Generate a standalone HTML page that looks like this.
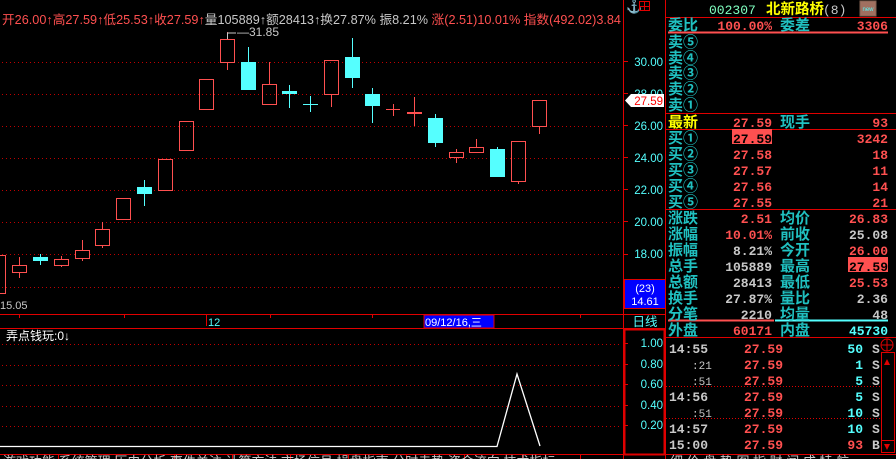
<!DOCTYPE html>
<html><head><meta charset="utf-8"><style>
html,body{margin:0;padding:0;background:#000;width:896px;height:459px;overflow:hidden}
svg{display:block}
text{font-family:"Liberation Sans","Noto Sans CJK SC","WenQuanYi Zen Hei",sans-serif}
.m, .m text{font-family:"Liberation Mono","Noto Sans CJK SC",monospace}
</style></head><body>
<svg width="896" height="459" viewBox="0 0 896 459" xmlns="http://www.w3.org/2000/svg">
<!-- top info line -->
<text x="2" y="24" font-size="12.5" fill="#ff5050" textLength="619" lengthAdjust="spacingAndGlyphs">开26.00↑高27.59↑低25.53↑收27.59↑<tspan fill="#c8c8c8">量105889↑额28413↑换27.87% 振8.21% </tspan>涨(2.51)10.01% 指数(492.02)3.84</text>

<!-- grid dotted lines main -->
<g stroke="#c00000" stroke-dasharray="1,3" stroke-width="1">
<line x1="2" y1="62.5" x2="622" y2="62.5"/>
<line x1="2" y1="94.5" x2="622" y2="94.5"/>
<line x1="2" y1="126.5" x2="622" y2="126.5"/>
<line x1="2" y1="158.5" x2="622" y2="158.5"/>
<line x1="2" y1="190.5" x2="622" y2="190.5"/>
<line x1="2" y1="222.5" x2="622" y2="222.5"/>
<line x1="2" y1="254.5" x2="622" y2="254.5"/>
<line x1="2" y1="287.5" x2="622" y2="287.5"/>
<line x1="2" y1="344.5" x2="622" y2="344.5"/>
<line x1="2" y1="365.5" x2="622" y2="365.5"/>
<line x1="2" y1="385.5" x2="622" y2="385.5"/>
<line x1="2" y1="406.5" x2="622" y2="406.5"/>
<line x1="2" y1="426.5" x2="622" y2="426.5"/>
</g>

<!-- candles -->
<g stroke="#ff5050" fill="none" stroke-width="1">
<rect x="-3.5" y="255.5" width="9" height="38"/>
<line x1="19.5" y1="257" x2="19.5" y2="278"/><rect x="12.5" y="265.5" width="14" height="7" fill="#000"/>
<line x1="61.5" y1="256" x2="61.5" y2="267"/><rect x="54.5" y="259.5" width="14" height="6" fill="#000"/>
<line x1="82.5" y1="240" x2="82.5" y2="261"/><rect x="75.5" y="250.5" width="14" height="8" fill="#000"/>
<line x1="102.5" y1="222" x2="102.5" y2="248"/><rect x="95.5" y="229.5" width="14" height="16" fill="#000"/>
<rect x="116.5" y="198.5" width="14" height="21"/>
<rect x="158.5" y="159.5" width="14" height="31"/>
<rect x="179.5" y="121.5" width="14" height="29"/>
<rect x="199.5" y="79.5" width="14" height="30"/>
<line x1="227.5" y1="32" x2="227.5" y2="70"/><rect x="220.5" y="39.5" width="14" height="23" fill="#000"/>
<line x1="269.5" y1="62" x2="269.5" y2="84"/><rect x="262.5" y="84.5" width="14" height="20"/>
<line x1="331.5" y1="94" x2="331.5" y2="107"/><rect x="324.5" y="60.5" width="14" height="34"/>
<line x1="393.5" y1="104" x2="393.5" y2="116"/><line x1="386" y1="109.5" x2="400" y2="109.5"/>
<line x1="414.5" y1="97" x2="414.5" y2="126"/><line x1="407" y1="113" x2="422" y2="113" stroke-width="2"/>
<line x1="456.5" y1="149" x2="456.5" y2="163"/><rect x="449.5" y="152.5" width="14" height="5" fill="#000"/>
<line x1="476.5" y1="139" x2="476.5" y2="153"/><rect x="469.5" y="147.5" width="14" height="5" fill="#000"/>
<line x1="518.5" y1="181" x2="518.5" y2="184"/><rect x="511.5" y="141.5" width="14" height="40"/>
<line x1="539.5" y1="126" x2="539.5" y2="134"/><rect x="532.5" y="100.5" width="14" height="26"/>
</g>
<g stroke="#55ffff" fill="#55ffff" stroke-width="1">
<line x1="40.5" y1="254" x2="40.5" y2="265"/><rect x="33" y="257" width="15" height="4" stroke="none"/>
<line x1="144.5" y1="180" x2="144.5" y2="206"/><rect x="137" y="187" width="15" height="7" stroke="none"/>
<line x1="248.5" y1="47" x2="248.5" y2="62"/><rect x="241" y="62" width="15" height="28" stroke="none"/>
<line x1="289.5" y1="85" x2="289.5" y2="108"/><rect x="282" y="91" width="15" height="3" stroke="none"/>
<line x1="310.5" y1="96" x2="310.5" y2="112"/><line x1="303" y1="104.5" x2="318" y2="104.5"/>
<line x1="352.5" y1="38" x2="352.5" y2="88"/><rect x="345" y="57" width="15" height="21" stroke="none"/>
<line x1="372.5" y1="88" x2="372.5" y2="123"/><rect x="365" y="94" width="15" height="12" stroke="none"/>
<line x1="435.5" y1="114" x2="435.5" y2="147"/><rect x="428" y="118" width="15" height="25" stroke="none"/>
<line x1="497.5" y1="147" x2="497.5" y2="149"/><rect x="490" y="149" width="15" height="28" stroke="none"/>
</g>
<polyline points="227.5,39 227.5,33 236,33" stroke="#c8c8c8" fill="none"/>
<text x="237" y="36" font-size="12" fill="#c8c8c8">—31.85</text>
<text x="0" y="309" font-size="11" fill="#c8c8c8">15.05</text>

<!-- date strip -->
<line x1="0" y1="314.5" x2="666" y2="314.5" stroke="#e00000"/>
<line x1="0" y1="328.5" x2="666" y2="328.5" stroke="#e00000"/>
<g stroke="#e00000"><line x1="19.5" y1="315" x2="19.5" y2="318"/><line x1="124.5" y1="315" x2="124.5" y2="318"/><line x1="206.5" y1="315" x2="206.5" y2="326"/><line x1="270.5" y1="315" x2="270.5" y2="318"/><line x1="372.5" y1="315" x2="372.5" y2="318"/><line x1="580.5" y1="315" x2="580.5" y2="318"/></g>
<text x="208" y="326" font-size="11" fill="#55ffff">12</text>
<rect x="424" y="315" width="70" height="13" fill="#0000ff" stroke="#e00000"/>
<text x="425" y="326" font-size="11" fill="#fff">09/12/16,三</text>

<!-- indicator -->
<text x="6" y="340" font-size="12" fill="#fff">弄点钱玩:0↓</text>
<polyline points="0,446.5 497,446.5 517,374 540,446" stroke="#fff" fill="none" stroke-width="1.3"/>

<!-- axis column -->
<line x1="623.5" y1="0" x2="623.5" y2="459" stroke="#e00000"/>
<line x1="665.5" y1="0" x2="665.5" y2="459" stroke="#e00000"/>
<text x="626" y="11" font-size="13" fill="#c8c8c8">⚓</text>
<rect x="639.5" y="1.5" width="10" height="9" stroke="#e00000" fill="none"/><line x1="644.5" y1="2" x2="644.5" y2="10" stroke="#e00000"/><line x1="640" y1="6.5" x2="649" y2="6.5" stroke="#e00000"/>
<g stroke="#e00000"><line x1="624" y1="61.5" x2="628" y2="61.5"/><line x1="624" y1="93.5" x2="628" y2="93.5"/><line x1="624" y1="125.5" x2="628" y2="125.5"/><line x1="624" y1="157.5" x2="628" y2="157.5"/><line x1="624" y1="189.5" x2="628" y2="189.5"/><line x1="624" y1="221.5" x2="628" y2="221.5"/><line x1="624" y1="254.5" x2="628" y2="254.5"/><line x1="624" y1="343.5" x2="628" y2="343.5"/><line x1="624" y1="364.5" x2="628" y2="364.5"/><line x1="624" y1="384.5" x2="628" y2="384.5"/><line x1="624" y1="405.5" x2="628" y2="405.5"/><line x1="624" y1="425.5" x2="628" y2="425.5"/></g>
<g font-size="11.5" fill="#55ffff" text-anchor="end">
<text x="663" y="66">30.00</text><text x="663" y="98">28.00</text><text x="663" y="130">26.00</text><text x="663" y="162">24.00</text><text x="663" y="194">22.00</text><text x="663" y="226">20.00</text><text x="663" y="258">18.00</text>
<text x="663" y="347">1.00</text><text x="663" y="368">0.80</text><text x="663" y="388">0.60</text><text x="663" y="409">0.40</text><text x="663" y="429">0.20</text>
</g>
<polygon points="625,100.5 631,94 664,94 664,107 631,107" fill="#fff"/>
<text x="663" y="105" font-size="11.5" fill="#ff0000" text-anchor="end">27.59</text>
<rect x="624.5" y="279.5" width="41" height="29" fill="#0000ff" stroke="#e00000"/>
<text x="645" y="292" font-size="11" fill="#fff" text-anchor="middle">(23)</text>
<text x="645" y="305" font-size="11" fill="#fff" text-anchor="middle">14.61</text>
<text x="645" y="326" font-size="12.5" fill="#55ffff" text-anchor="middle">日线</text>
<rect x="624.5" y="329.5" width="40" height="125" stroke="#e00000" stroke-width="2" fill="none"/>

<!-- right panel -->
<text x="709" y="14" fill="#80ffc0" font-size="13" class="m">002307</text>
<text x="766" y="14" fill="#ffff00" font-size="14.5" font-weight="bold">北新路桥</text>
<text x="823" y="14" fill="#c8c8c8" font-size="13" class="m">(8)</text>
<rect x="860" y="1" width="16" height="15" fill="#a07060" stroke="#806050"/>
<text x="868" y="11" font-size="6" fill="#55ffff" text-anchor="middle">new</text>
<line x1="666" y1="17.5" x2="896" y2="17.5" stroke="#e00000"/>
<line x1="668" y1="32.5" x2="888" y2="32.5" stroke="#ff5050" stroke-width="2"/>
<line x1="666" y1="113.5" x2="896" y2="113.5" stroke="#e00000"/>
<line x1="666" y1="129.5" x2="896" y2="129.5" stroke="#e00000"/>
<line x1="666" y1="209.5" x2="896" y2="209.5" stroke="#e00000"/>
<line x1="668" y1="320.5" x2="774" y2="320.5" stroke="#ff5050" stroke-width="2"/>
<line x1="775" y1="320.5" x2="888" y2="320.5" stroke="#55ffff" stroke-width="2"/>
<line x1="666" y1="337.5" x2="896" y2="337.5" stroke="#e00000"/>
<g stroke="#e00000" stroke-dasharray="1,2"><line x1="666" y1="386.5" x2="880" y2="386.5"/><line x1="666" y1="418.5" x2="880" y2="418.5"/></g>

<g font-size="15" font-weight="bold">
<g fill="#20c0c0">
<text x="668" y="30">委比</text><text x="780" y="30">委差</text>
<text x="668" y="47">卖⑤</text><text x="668" y="63">卖④</text><text x="668" y="78">卖③</text><text x="668" y="94">卖②</text><text x="668" y="110">卖①</text>
<text x="780" y="127">现手</text>
<text x="668" y="143">买①</text><text x="668" y="159">买②</text><text x="668" y="175">买③</text><text x="668" y="191">买④</text><text x="668" y="207">买⑤</text>
<text x="668" y="223">涨跌</text><text x="780" y="223">均价</text>
<text x="668" y="239">涨幅</text><text x="780" y="239">前收</text>
<text x="668" y="255">振幅</text><text x="780" y="255">今开</text>
<text x="668" y="271">总手</text><text x="780" y="271">最高</text>
<text x="668" y="287">总额</text><text x="780" y="287">最低</text>
<text x="668" y="303">换手</text><text x="780" y="303">量比</text>
<text x="668" y="319">分笔</text><text x="780" y="319">均量</text>
<text x="668" y="335">外盘</text><text x="780" y="335">内盘</text>
</g>
<text x="668" y="127" fill="#ffff00">最新</text>
</g>
<rect x="732" y="129" width="40" height="15" fill="#ff5050"/>
<rect x="848" y="257" width="40" height="15" fill="#ff5050"/>
<g font-size="13" class="m" text-anchor="end" font-weight="bold">
<g fill="#ff5050">
<text x="772" y="30">100.00%</text><text x="888" y="30">3306</text>
<text x="772" y="127">27.59</text><text x="888" y="127">93</text>
<text x="772" y="143" fill="#000">27.59</text><text x="888" y="143">3242</text>
<text x="772" y="159">27.58</text><text x="888" y="159">18</text>
<text x="772" y="175">27.57</text><text x="888" y="175">11</text>
<text x="772" y="191">27.56</text><text x="888" y="191">14</text>
<text x="772" y="207">27.55</text><text x="888" y="207">21</text>
<text x="772" y="223">2.51</text><text x="888" y="223">26.83</text>
<text x="772" y="239">10.01%</text>
<text x="888" y="255">26.00</text>
<text x="888" y="271" fill="#000">27.59</text>
<text x="888" y="287">25.53</text>
<text x="772" y="335">60171</text>
</g>
<g fill="#c8c8c8">
<text x="888" y="239">25.08</text>
<text x="772" y="255">8.21%</text>
<text x="772" y="271">105889</text>
<text x="772" y="287">28413</text>
<text x="772" y="303">27.87%</text><text x="888" y="303">2.36</text>
<text x="772" y="319">2210</text><text x="888" y="319">48</text>
</g>
<text x="888" y="335" fill="#55ffff">45730</text>
</g>

<!-- ticks -->
<g font-size="13" class="m" font-weight="bold">
<g fill="#c8c8c8">
<text x="669" y="353">14:55</text><text x="692" y="369" font-size="11" font-weight="normal">:21</text><text x="692" y="385" font-size="11" font-weight="normal">:51</text>
<text x="669" y="401">14:56</text><text x="692" y="417" font-size="11" font-weight="normal">:51</text>
<text x="669" y="433">14:57</text><text x="669" y="449">15:00</text>
<text x="872" y="353">S</text><text x="872" y="369">S</text><text x="872" y="385">S</text><text x="872" y="401">S</text><text x="872" y="417">S</text><text x="872" y="433">S</text><text x="872" y="449">B</text>
</g>
<g fill="#ff5050" text-anchor="end">
<text x="783" y="353">27.59</text><text x="783" y="369">27.59</text><text x="783" y="385">27.59</text><text x="783" y="401">27.59</text><text x="783" y="417">27.59</text><text x="783" y="433">27.59</text><text x="783" y="449">27.59</text>
<text x="863" y="449">93</text>
</g>
<g fill="#55ffff" text-anchor="end">
<text x="863" y="353">50</text><text x="863" y="369">1</text><text x="863" y="385">5</text><text x="863" y="401">5</text><text x="863" y="417">10</text><text x="863" y="433">10</text>
</g>
</g>
<!-- scrollbar -->
<circle cx="887" cy="345" r="6" stroke="#e00000" fill="none"/><line x1="881" y1="345" x2="893" y2="345" stroke="#e00000"/><line x1="887" y1="339" x2="887" y2="351" stroke="#e00000"/>
<rect x="881.5" y="352.5" width="13" height="100" stroke="#e00000" fill="none"/>
<polygon points="884,365 887,359 890,365" fill="#e00000"/>
<polygon points="884,444 887,450 890,444" fill="#e00000"/>
<line x1="881" y1="440.5" x2="895" y2="440.5" stroke="#e00000"/>

<!-- bottom tabs -->
<line x1="0" y1="454.5" x2="896" y2="454.5" stroke="#e00000"/>
<g stroke="#e00000"><line x1="58.5" y1="455" x2="58.5" y2="459"/><line x1="116.5" y1="455" x2="116.5" y2="459"/><line x1="174.5" y1="455" x2="174.5" y2="459"/><line x1="232.5" y1="455" x2="232.5" y2="459"/><line x1="290.5" y1="455" x2="290.5" y2="459"/><line x1="348.5" y1="455" x2="348.5" y2="459"/><line x1="406.5" y1="455" x2="406.5" y2="459"/><line x1="464.5" y1="455" x2="464.5" y2="459"/><line x1="522.5" y1="455" x2="522.5" y2="459"/><line x1="580.5" y1="455" x2="580.5" y2="459"/></g>
<text x="3" y="466" font-size="13" fill="#c8c8c8">游戏功能 系统管理 历史分析 事件关注 计算方法 市场信号 操盘指南 分时走势 资金流向 技术指标</text>
<text x="670" y="466" font-size="13" fill="#c8c8c8">细 价 盘 势 图 指 财 闻 成 特 航</text>
</svg>
</body></html>
